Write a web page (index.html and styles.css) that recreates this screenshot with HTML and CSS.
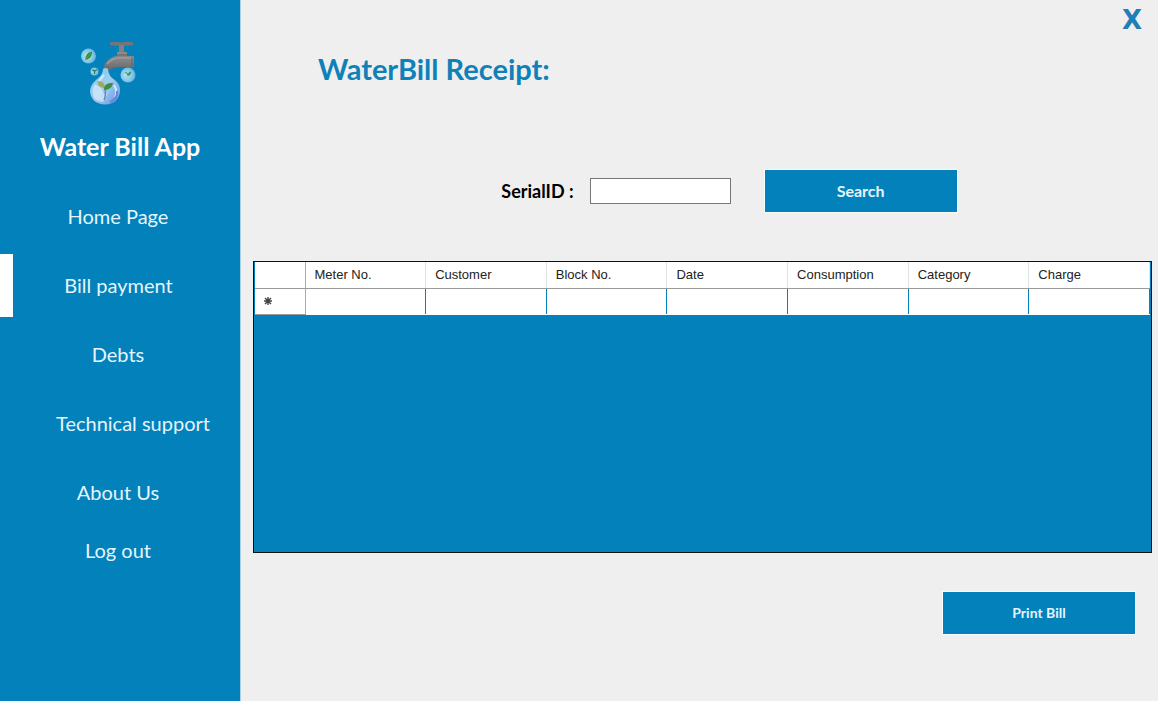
FILE: index.html
```html
<!DOCTYPE html>
<html lang="en">
<head>
<meta charset="utf-8">
<title>Water Bill App</title>
<link rel="stylesheet" href="styles.css">
</head>
<body>
<div class="app">
  <aside class="sidebar">
    <div class="brand">
      <svg class="logo" viewBox="0 0 80 80" aria-hidden="true">
        <defs>
          <linearGradient id="metal" x1="0" y1="0" x2="0" y2="1">
            <stop offset="0" stop-color="#8f8d8d"/><stop offset=".5" stop-color="#7f8183"/><stop offset="1" stop-color="#686668"/>
          </linearGradient>
          <radialGradient id="bubble" cx=".4" cy=".5" r=".6">
            <stop offset="0" stop-color="#b4e4ee"/><stop offset=".65" stop-color="#83c8e8"/><stop offset="1" stop-color="#62addf"/>
          </radialGradient>
          <linearGradient id="drop" x1="0" y1="0" x2="1" y2="1">
            <stop offset="0" stop-color="#79c8ee"/><stop offset=".5" stop-color="#a3cdf0"/><stop offset="1" stop-color="#5f97e0"/>
          </linearGradient>
        </defs>
        <path d="M40 12.500Q46 11 51 12.500Q57 11 63 12.500V15Q57 16.500 51 15Q46 16.500 40 15Z" fill="#7b7476"/>
        <path d="M49 15H54V22H49Z" fill="#85807f"/>
        <path d="M47 22H57V26H64V37H54Q45 36 42 39Q41 41 33 40Q34 32 41 28Q44 26 47 26Z" fill="url(#metal)"/>
        <path d="M37 34Q42 28 49 28H63" fill="none" stroke="#a09c9b" stroke-width="1.500"/>
        <path d="M47 25H57M62 27V36" stroke="#646063" fill="none"/>
        <circle cx="18.500" cy="26" r="7.500" fill="url(#bubble)"/>
        <path d="M15.500 30Q15 23 22 21.500Q22 29 15.500 30Z" fill="#348b3b"/>
        <path d="M15 30L21 23" stroke="#76a94c" stroke-width=".8"/>
        <circle cx="24.500" cy="41.500" r="4" fill="url(#bubble)"/>
        <path d="M24.500 44V41L22.500 40L25 41L27 39.500" fill="none" stroke="#30835c" stroke-width="1.400"/>
        <circle cx="58" cy="45" r="7.500" fill="url(#bubble)"/>
        <path d="M57.500 49Q59 45 54.500 42Q58 42 58 45Q58 42 61 41.500Q61 45 58 46" fill="#348f48"/>
        <path d="M33 39Q36 37 38 39Q38 46 46 51Q51 56 50 62Q48 74 35 74.500Q22 74 20 62Q20 55 26 50Q33 45 33 39Z" fill="url(#drop)"/>
        <path d="M25 54Q20 61 25 69Q29 72 33 72L40 59L35 66L31 58Z" fill="#d4eaf8" opacity=".75"/>
        <path d="M34 45L29 51M44 55Q48 61 45 67" fill="none" stroke="#c9efff" stroke-width="2"/>
        <path d="M40 72Q48 69 47 61" fill="none" stroke="#6f7fdc" stroke-width="2"/>
        <path d="M34 70Q37 63 34 57" fill="none" stroke="#637fb4" stroke-width="1.200"/>
        <path d="M35 58Q27 58 28 51Q35 51 35 58Z" fill="#9da95d"/>
        <path d="M34 60Q34 52 43 53Q42 60 34 60Z" fill="#3c8d46"/>
      </svg>
      <h2 class="brand-name">Water Bill App</h2>
    </div>
    <nav class="menu">
      <a class="item" href="#">Home Page</a>
      <a class="item active" href="#" aria-current="page">Bill payment</a>
      <a class="item" href="#">Debts</a>
      <a class="item indented" href="#">Technical support</a>
      <a class="item" href="#">About Us</a>
      <a class="item compact" href="#">Log out</a>
    </nav>
  </aside>
  <main class="content">
    <header class="topbar"><button class="close" type="button">X</button></header>
    <h1 class="title">WaterBill Receipt:</h1>
    <form class="search">
      <label class="label" for="serial">SerialID :</label>
      <input class="field" id="serial" type="text">
      <button class="action" type="button">Search</button>
    </form>
    <div class="grid-box">
      <table class="grid">
        <thead>
          <tr><th class="row-head"></th><th>Meter No.</th><th>Customer</th><th>Block No.</th><th>Date</th><th>Consumption</th><th>Category</th><th>Charge</th></tr>
        </thead>
        <tbody>
          <tr><th class="row-head"><svg class="new-row" viewBox="0 0 8 8" role="img" aria-label="New row"><path d="M4 0V8M0 4H8M1 1L7 7M7 1L1 7" stroke="#444" stroke-width="1.400"/></svg></th><td></td><td></td><td></td><td></td><td></td><td></td><td></td></tr>
        </tbody>
      </table>
    </div>
    <div class="footer"><button class="action print" type="button">Print Bill</button></div>
  </main>
</div>
</body>
</html>
```
FILE: styles.css
```css
* {
  box-sizing: border-box;
}

body {
  margin: 0;
  background: #efefef;
  font-family: Lato, "Open Sans", sans-serif;
}

.app {
  display: grid;
  grid-template-columns: 241px 1fr;
  min-height: 100vh;
}

.sidebar {
  background: #0281bb;
  border-right: 1px solid #a9cfe2;
  color: #fff;
}

.brand {
  display: flex;
  flex-direction: column;
  align-items: center;
  padding-top: 30px;
}

.logo {
  width: 80px;
  height: 80px;
  margin-right: 20px;
}

.brand-name {
  margin: 20px 0 0;
  font-size: 25px;
  line-height: 32px;
}

.menu {
  display: flex;
  flex-direction: column;
  gap: 6px;
  margin-top: 23px;
}

.item {
  display: flex;
  align-items: center;
  justify-content: center;
  height: 63px;
  padding-right: 4px;
  padding-bottom: 2px;
  color: #e6f5fc;
  font-size: 20px;
  text-decoration: none;
}

.item.active {
  border-left: 13px solid #fff;
  padding-right: 16px;
}

.item.indented {
  padding-left: 26px;
  padding-right: 0;
}

.item.compact {
  height: 42px;
}

.content {
  padding: 0 6px 0 12px;
}

.topbar {
  display: flex;
  justify-content: flex-end;
}

.close {
  padding: 4px 10px;
  border: 0;
  background: none;
  color: #1f7fb8;
  font: bold 26px/32px "DejaVu Sans", sans-serif;
}

.title {
  margin: 11px 0 0 65px;
  color: #0f81b9;
  font-size: 29px;
  line-height: 36px;
}

.search {
  display: flex;
  align-items: center;
  justify-content: center;
  margin-top: 82px;
  padding-left: 54px;
}

.label {
  margin-right: 16px;
  font-size: 18px;
  font-weight: bold;
}

.field {
  width: 141px;
  height: 26px;
  margin-right: 33px;
  border: 1px solid #777;
  background: #fff;
}

.action {
  width: 194px;
  height: 44px;
  border: 1px solid #f8fcff;
  background: #0281bb;
  color: #e6f5fc;
  font: bold 16px/20px Lato, sans-serif;
}

.print {
  font-size: 14px;
}

.grid-box {
  min-height: 292px;
  margin-top: 48px;
  padding: 0 1px;
  border: 1px solid #111;
  background: #0281bb;
}

.grid {
  width: 100%;
  border-collapse: collapse;
  table-layout: fixed;
  background: #fff;
  color: #222;
  font: 13px/16px "Liberation Sans", sans-serif;
}

.grid th {
  height: 26px;
  padding: 0 9px;
  border-right: 1px solid #e2e2e2;
  border-bottom: 1px solid #999;
  font-weight: normal;
  text-align: left;
}

.grid td {
  height: 26px;
  border-right: 1px solid #0281bb;
}

.grid .row-head {
  width: 50px;
  border-right: 1px solid #aaa;
}

.new-row {
  display: block;
  width: 8px;
  height: 8px;
}

.footer {
  display: flex;
  justify-content: flex-end;
  margin-top: 38px;
  padding-right: 16px;
}
```
